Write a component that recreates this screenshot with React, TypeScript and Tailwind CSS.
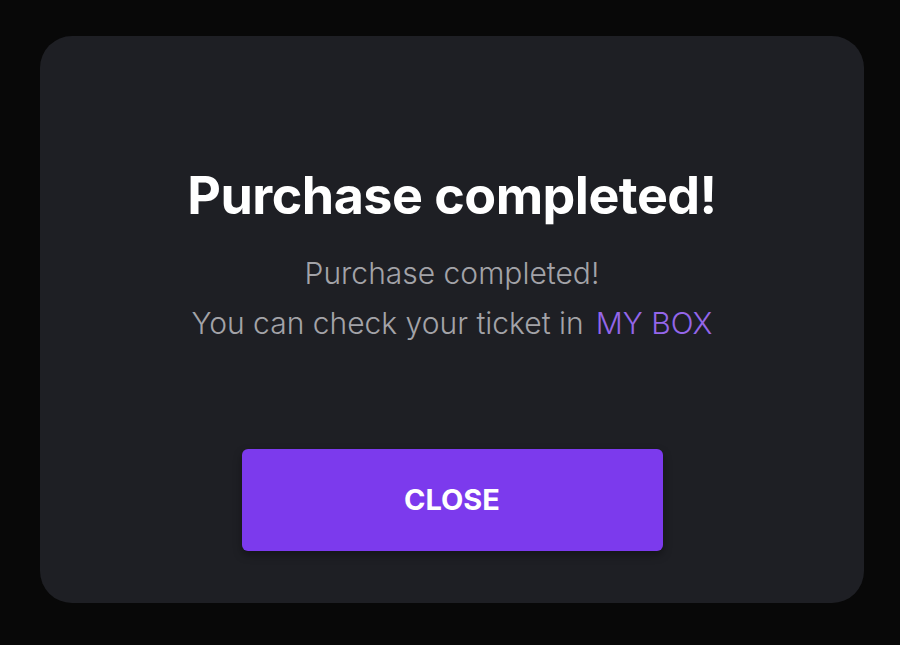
import React from "react";

export default function App() {
  return (
    <div
      className="w-[900px] h-[645px] bg-[#080808] pl-10 pr-9 pt-9 pb-[42px]"
      style={{ fontFamily: "Inter, 'Noto Sans', sans-serif" }}
    >
      <div className="h-full bg-[#1e1f24] rounded-[32px] flex flex-col items-center pt-[128px]">
        <h1 className="text-[52px] leading-[64px] font-bold text-white tracking-[-0.01em]">
          Purchase completed!
        </h1>
        <div className="mt-[20px] text-[30px] leading-[50px] text-[#a3a3a8] text-center font-light">
          <p>Purchase completed!</p>
          <p>
            You can check your ticket in
            <span className="ml-3 text-[#9466ea]">MY BOX</span>
          </p>
        </div>
        <button className="mt-[101px] w-[421px] h-[102px] rounded-md bg-[#7c3aed] text-white text-[29px] font-bold shadow-[0_4px_8px_rgba(0,0,0,0.35)]">
          CLOSE
        </button>
      </div>
    </div>
  );
}
